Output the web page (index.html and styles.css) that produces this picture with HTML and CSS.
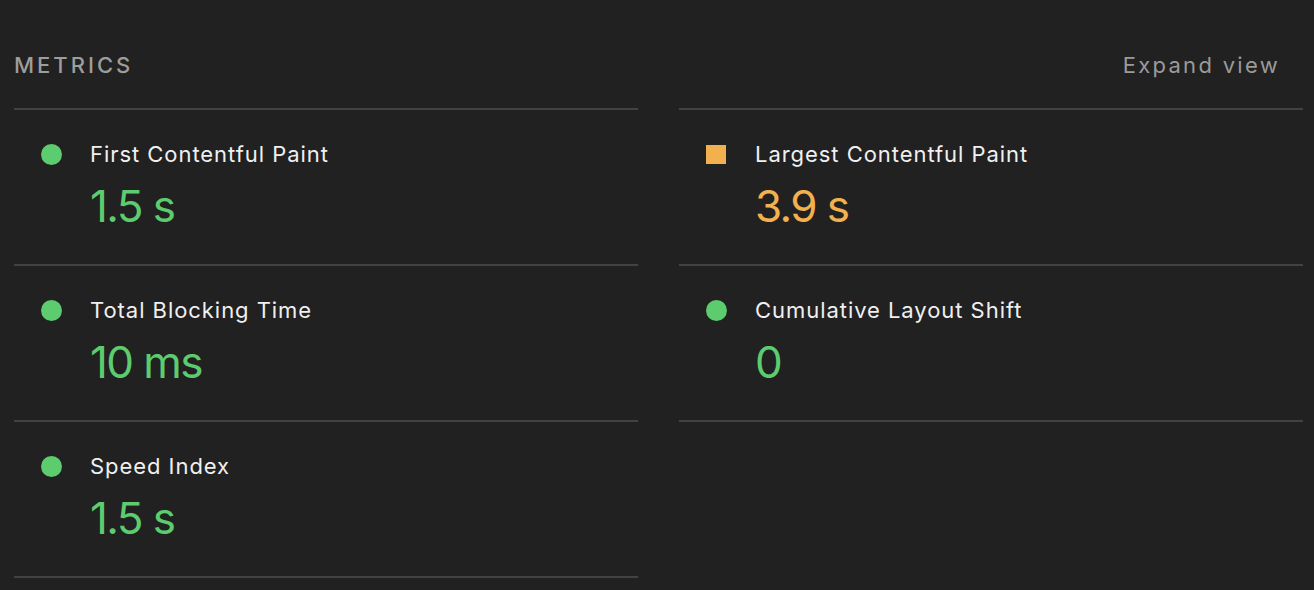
FILE: index.html
```html
<!DOCTYPE html>
<html>
<head>
<meta charset="utf-8">
<link rel="stylesheet" href="styles.css">
</head>
<body>
<section class="metrics">
  <div class="header">
    <span class="heading">METRICS</span>
    <span class="expand">Expand view</span>
  </div>
  <div class="grid">
    <div class="metric">
      <span class="icon dot"></span>
      <div class="body">
        <div class="title">First Contentful Paint</div>
        <div class="value pass">1.5 s</div>
      </div>
    </div>
    <div class="metric">
      <span class="icon square"></span>
      <div class="body">
        <div class="title">Largest Contentful Paint</div>
        <div class="value average">3.9 s</div>
      </div>
    </div>
    <div class="metric">
      <span class="icon dot"></span>
      <div class="body">
        <div class="title">Total Blocking Time</div>
        <div class="value pass">10 ms</div>
      </div>
    </div>
    <div class="metric">
      <span class="icon dot"></span>
      <div class="body">
        <div class="title">Cumulative Layout Shift</div>
        <div class="value pass">0</div>
      </div>
    </div>
    <div class="metric">
      <span class="icon dot"></span>
      <div class="body">
        <div class="title">Speed Index</div>
        <div class="value pass">1.5 s</div>
      </div>
    </div>
  </div>
</section>
</body>
</html>
```
FILE: styles.css
```css
html, body {
  margin: 0;
  padding: 0;
  background: #212121;
  height: 100%;
}
body {
  font-family: Inter, "Noto Sans", sans-serif;
  color: #ececec;
}
.metrics {
  padding: 51px 11px 0 14px;
}
.header {
  display: flex;
  justify-content: space-between;
  align-items: baseline;
  height: 57px;
}
.heading {
  font-size: 22px;
  line-height: 28px;
  font-weight: 500;
  letter-spacing: 3px;
  color: #9d9d9d;
}
.expand {
  font-size: 22px;
  line-height: 28px;
  letter-spacing: 2.3px;
  color: #9a9a9a;
  padding-right: 23px;
}
.grid {
  display: grid;
  grid-template-columns: 1fr 1fr;
  column-gap: 41px;
}
.metric {
  display: flex;
  border-top: 2px solid #424242;
  border-bottom: 2px solid #424242;
  margin-bottom: -2px;
  height: 154px;
  box-sizing: content-box;
}
.icon {
  flex: none;
  margin: 34px 0 0 27px;
  width: 21px;
  height: 21px;
  background: #5ccc6f;
}
.dot {
  border-radius: 50%;
}
.square {
  margin-left: 27px;
  margin-top: 35px;
  width: 20px;
  height: 19px;
  background: #f3b04f;
}
.body {
  margin-left: 28px;
  padding-top: 30px;
}
.square + .body {
  margin-left: 29px;
}
.title {
  font-size: 22px;
  line-height: 28px;
  letter-spacing: 0.95px;
  color: #f0f0f0;
}
.value {
  margin-top: 12px;
  font-size: 44px;
  line-height: 52px;
  letter-spacing: -1.6px;
}
.pass { color: #5ccc6f; }
.average { color: #f3b04f; }
```
